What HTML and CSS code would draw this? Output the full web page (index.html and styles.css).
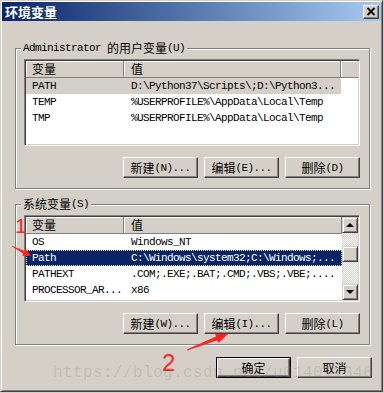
FILE: index.html
```html
<!DOCTYPE html>
<html>
<head>
<meta charset="utf-8">
<link rel="stylesheet" href="styles.css">
</head>
<body>
<div class="win">
  <div class="title">
    <span class="tt">环境变量</span>
    <div class="close"><svg width="10" height="9" viewBox="0 0 10 9"><path d="M1.5 1 L8.5 8 M8.5 1 L1.5 8" stroke="#000" stroke-width="1.8"/></svg></div>
  </div>

  <div class="group g1">
    <div class="legend">Administrator<span class="cj sp">的用户变量</span>(U)</div>
    <div class="list">
      <div class="hdr">
        <div class="hc c1"><span class="cj">变量</span></div>
        <div class="hc c2 w1"><span class="cj">值</span></div>
        <div class="hc fill"></div>
      </div>
      <div class="row r1 gsel"><div class="c1">PATH</div><div class="c2 w1">D:\Python37\Scripts\;D:\Python3...</div></div>
      <div class="row r1"><div class="c1">TEMP</div><div class="c2 w1">%USERPROFILE%\AppData\Local\Temp</div></div>
      <div class="row r1"><div class="c1">TMP</div><div class="c2 w1">%USERPROFILE%\AppData\Local\Temp</div></div>
    </div>
    <div class="btns">
      <div class="btn"><span class="cj">新建</span>(N)...</div>
      <div class="btn"><span class="cj">编辑</span>(E)...</div>
      <div class="btn"><span class="cj">删除</span>(D)</div>
    </div>
  </div>

  <div class="group g2">
    <div class="legend"><span class="cj">系统变量</span>(S)</div>
    <div class="list lv2">
      <div class="cols">
        <div class="hdr">
          <div class="hc c1"><span class="cj">变量</span></div>
          <div class="hc c2 w2"><span class="cj">值</span></div>
        </div>
        <div class="row"><div class="c1">OS</div><div class="c2 w2">Windows_NT</div></div>
        <div class="row nsel"><div class="c1">Path</div><div class="c2 w2">C:\Windows\system32;C:\Windows;...</div></div>
        <div class="row"><div class="c1">PATHEXT</div><div class="c2 w2">.COM;.EXE;.BAT;.CMD;.VBS;.VBE;....</div></div>
        <div class="row"><div class="c1">PROCESSOR_AR...</div><div class="c2 w2">x86</div></div>
      </div>
      <div class="sb">
        <div class="sbtn"><svg width="14" height="14" viewBox="0 0 14 14"><polygon points="3,9 11,9 7,5" fill="#000"/></svg></div>
        <div class="track"><div class="thumb"></div></div>
        <div class="sbtn"><svg width="14" height="14" viewBox="0 0 14 14"><polygon points="3,5 11,5 7,9" fill="#000"/></svg></div>
      </div>
    </div>
    <div class="btns">
      <div class="btn"><span class="cj">新建</span>(W)...</div>
      <div class="btn"><span class="cj">编辑</span>(I)...</div>
      <div class="btn"><span class="cj">删除</span>(L)</div>
    </div>
  </div>

  <div class="foot">
    <div class="btn def"><span class="cj">确定</span></div>
    <div class="btn"><span class="cj">取消</span></div>
  </div>

  <div class="wm">https://blog.csdn.net/u014011346</div>
  <div class="mark m1">1</div>
  <div class="mark m2">2</div>
  <svg class="arrows" width="384" height="393" viewBox="0 0 384 393">
    <polygon fill="#f22" points="12.14,245.73 24.63,250.95 25.79,248.74 31,256 22.07,255.82 23.23,253.61 11.86,246.27"/>
    <polygon fill="#f22" points="186.82,349.53 216.09,336.51 215,333.71 228,334 218.64,343.03 217.55,340.23 187.18,350.47"/>
  </svg>
</div>
</body>
</html>
```

FILE: styles.css
```css
* { box-sizing: border-box; }

body {
  margin: 0;
  background: #d4d0c8;
  font-family: "Liberation Mono", monospace;
  font-size: 11px;
  color: #000;
}

.win {
  position: relative;
  width: 383px;
  height: 392px;
  background: #d4d0c8;
  border: 1px solid;
  border-color: #d4d0c8 #404040 #404040 #d4d0c8;
  box-shadow: inset 1px 1px #fff, inset -1px -1px #808080;
  padding: 1px;
}

.title {
  height: 19px;
  display: flex;
  align-items: center;
  justify-content: space-between;
  background: linear-gradient(to right, #0a246a, #a6caf0);
  padding: 0 2px 0 3px;
}

.tt {
  color: #fff;
  font: bold 13px/19px "Noto Sans CJK SC", sans-serif;
}

.close {
  width: 16px;
  height: 14px;
  background: #d4d0c8;
  border: 1px solid;
  border-color: #fff #404040 #404040 #fff;
  box-shadow: inset -1px -1px #808080;
  display: flex;
  align-items: center;
  justify-content: center;
}
.close svg { display: block; }

.cj {
  font-family: "Noto Sans CJK SC", sans-serif;
  font-size: 12px;
  letter-spacing: 0;
}
.sp { margin-left: 6px; }

.group {
  position: relative;
  width: 355px;
  margin-left: 13px;
  border: 1px solid #808080;
  box-shadow: inset 1px 1px #fff, 1px 1px #fff;
  padding: 10px 9px 10px 8px;
}
.g1 { margin-top: 27px; }
.g2 { margin-top: 15px; }

.legend {
  position: absolute;
  left: 5px;
  top: -7px;
  height: 12px;
  line-height: 12px;
  padding: 0 2px;
  background: #d4d0c8;
  letter-spacing: -0.6px;
  white-space: nowrap;
  display: flex;
  align-items: center;
}

.list {
  height: 87px;
  background: #fff;
  border: 1px solid;
  border-color: #808080 #fff #fff #808080;
  box-shadow: inset 1px 1px #404040, inset -1px -1px #d4d0c8;
  padding: 1px;
  overflow: hidden;
}
.lv2 { display: flex; }
.cols { width: 316px; }

.hdr {
  display: flex;
  height: 17px;
}
.hc {
  background: #d4d0c8;
  box-shadow: inset 1px 1px #fff;
  border-right: 1px solid #808080;
  border-bottom: 1px solid #808080;
  height: 17px;
  line-height: 16px;
  display: flex;
  align-items: center;
}
.hc.fill { flex: 1; border-right: 0; }

.c1 { width: 98px; padding-left: 6px; flex: none; }
.c2 { padding-left: 7px; flex: none; }
.w1 { width: 217px; }
.w2 { width: 218px; }

.row {
  display: flex;
  height: 16px;
  line-height: 16px;
  letter-spacing: -0.6px;
  white-space: nowrap;
}
.row > div { overflow: hidden; }
.r1 { width: 315px; }
.gsel { background: #d4d0c8; }
.nsel {
  background: #0a246a;
  color: #fff;
  outline: 1px dotted #e0e0a0;
  outline-offset: -1px;
}

.sb {
  width: 16px;
  display: flex;
  flex-direction: column;
}
.sbtn {
  width: 16px;
  height: 16px;
  flex: none;
  background: #d4d0c8;
  border: 1px solid;
  border-color: #d4d0c8 #404040 #404040 #d4d0c8;
  box-shadow: inset 1px 1px #fff, inset -1px -1px #808080;
}
.sbtn svg { display: block; }
.track {
  flex: 1;
  background-color: #d4d0c8;
  background-image: conic-gradient(#fff 25%, #d4d0c8 0 50%, #fff 0 75%, #d4d0c8 0);
  background-size: 2px 2px;
}
.thumb {
  margin-top: 13px;
  height: 16px;
  background: #d4d0c8;
  border: 1px solid;
  border-color: #d4d0c8 #404040 #404040 #d4d0c8;
  box-shadow: inset 1px 1px #fff, inset -1px -1px #808080;
}

.btns {
  display: flex;
  justify-content: flex-end;
  gap: 6px;
  margin-top: 11px;
}
.btn {
  width: 75px;
  height: 21px;
  background: #d4d0c8;
  border: 1px solid;
  border-color: #fff #404040 #404040 #fff;
  box-shadow: inset -1px -1px #808080;
  display: flex;
  align-items: center;
  justify-content: center;
  letter-spacing: -0.6px;
  white-space: nowrap;
}
.btn.def {
  border-color: #000;
  box-shadow: inset 1px 1px #fff, inset -1px -1px #404040, inset -2px -2px #808080;
}

.foot {
  display: flex;
  justify-content: flex-end;
  gap: 6px;
  margin-top: 12px;
  padding-right: 9px;
}

.wm {
  position: absolute;
  left: 52px;
  top: 364px;
  font: 16px/16px "Liberation Mono", monospace;
  letter-spacing: 0.4px;
  color: rgba(140, 136, 128, 0.28);
  white-space: nowrap;
}

.mark {
  position: absolute;
  color: #f22;
  font-family: "Liberation Sans", sans-serif;
}
.m1 { left: 14px; top: 214px; font-size: 21px; line-height: 21px; }
.m2 { left: 161px; top: 350px; font-size: 24px; line-height: 24px; }

.arrows {
  position: absolute;
  left: -1px;
  top: -1px;
}
```
